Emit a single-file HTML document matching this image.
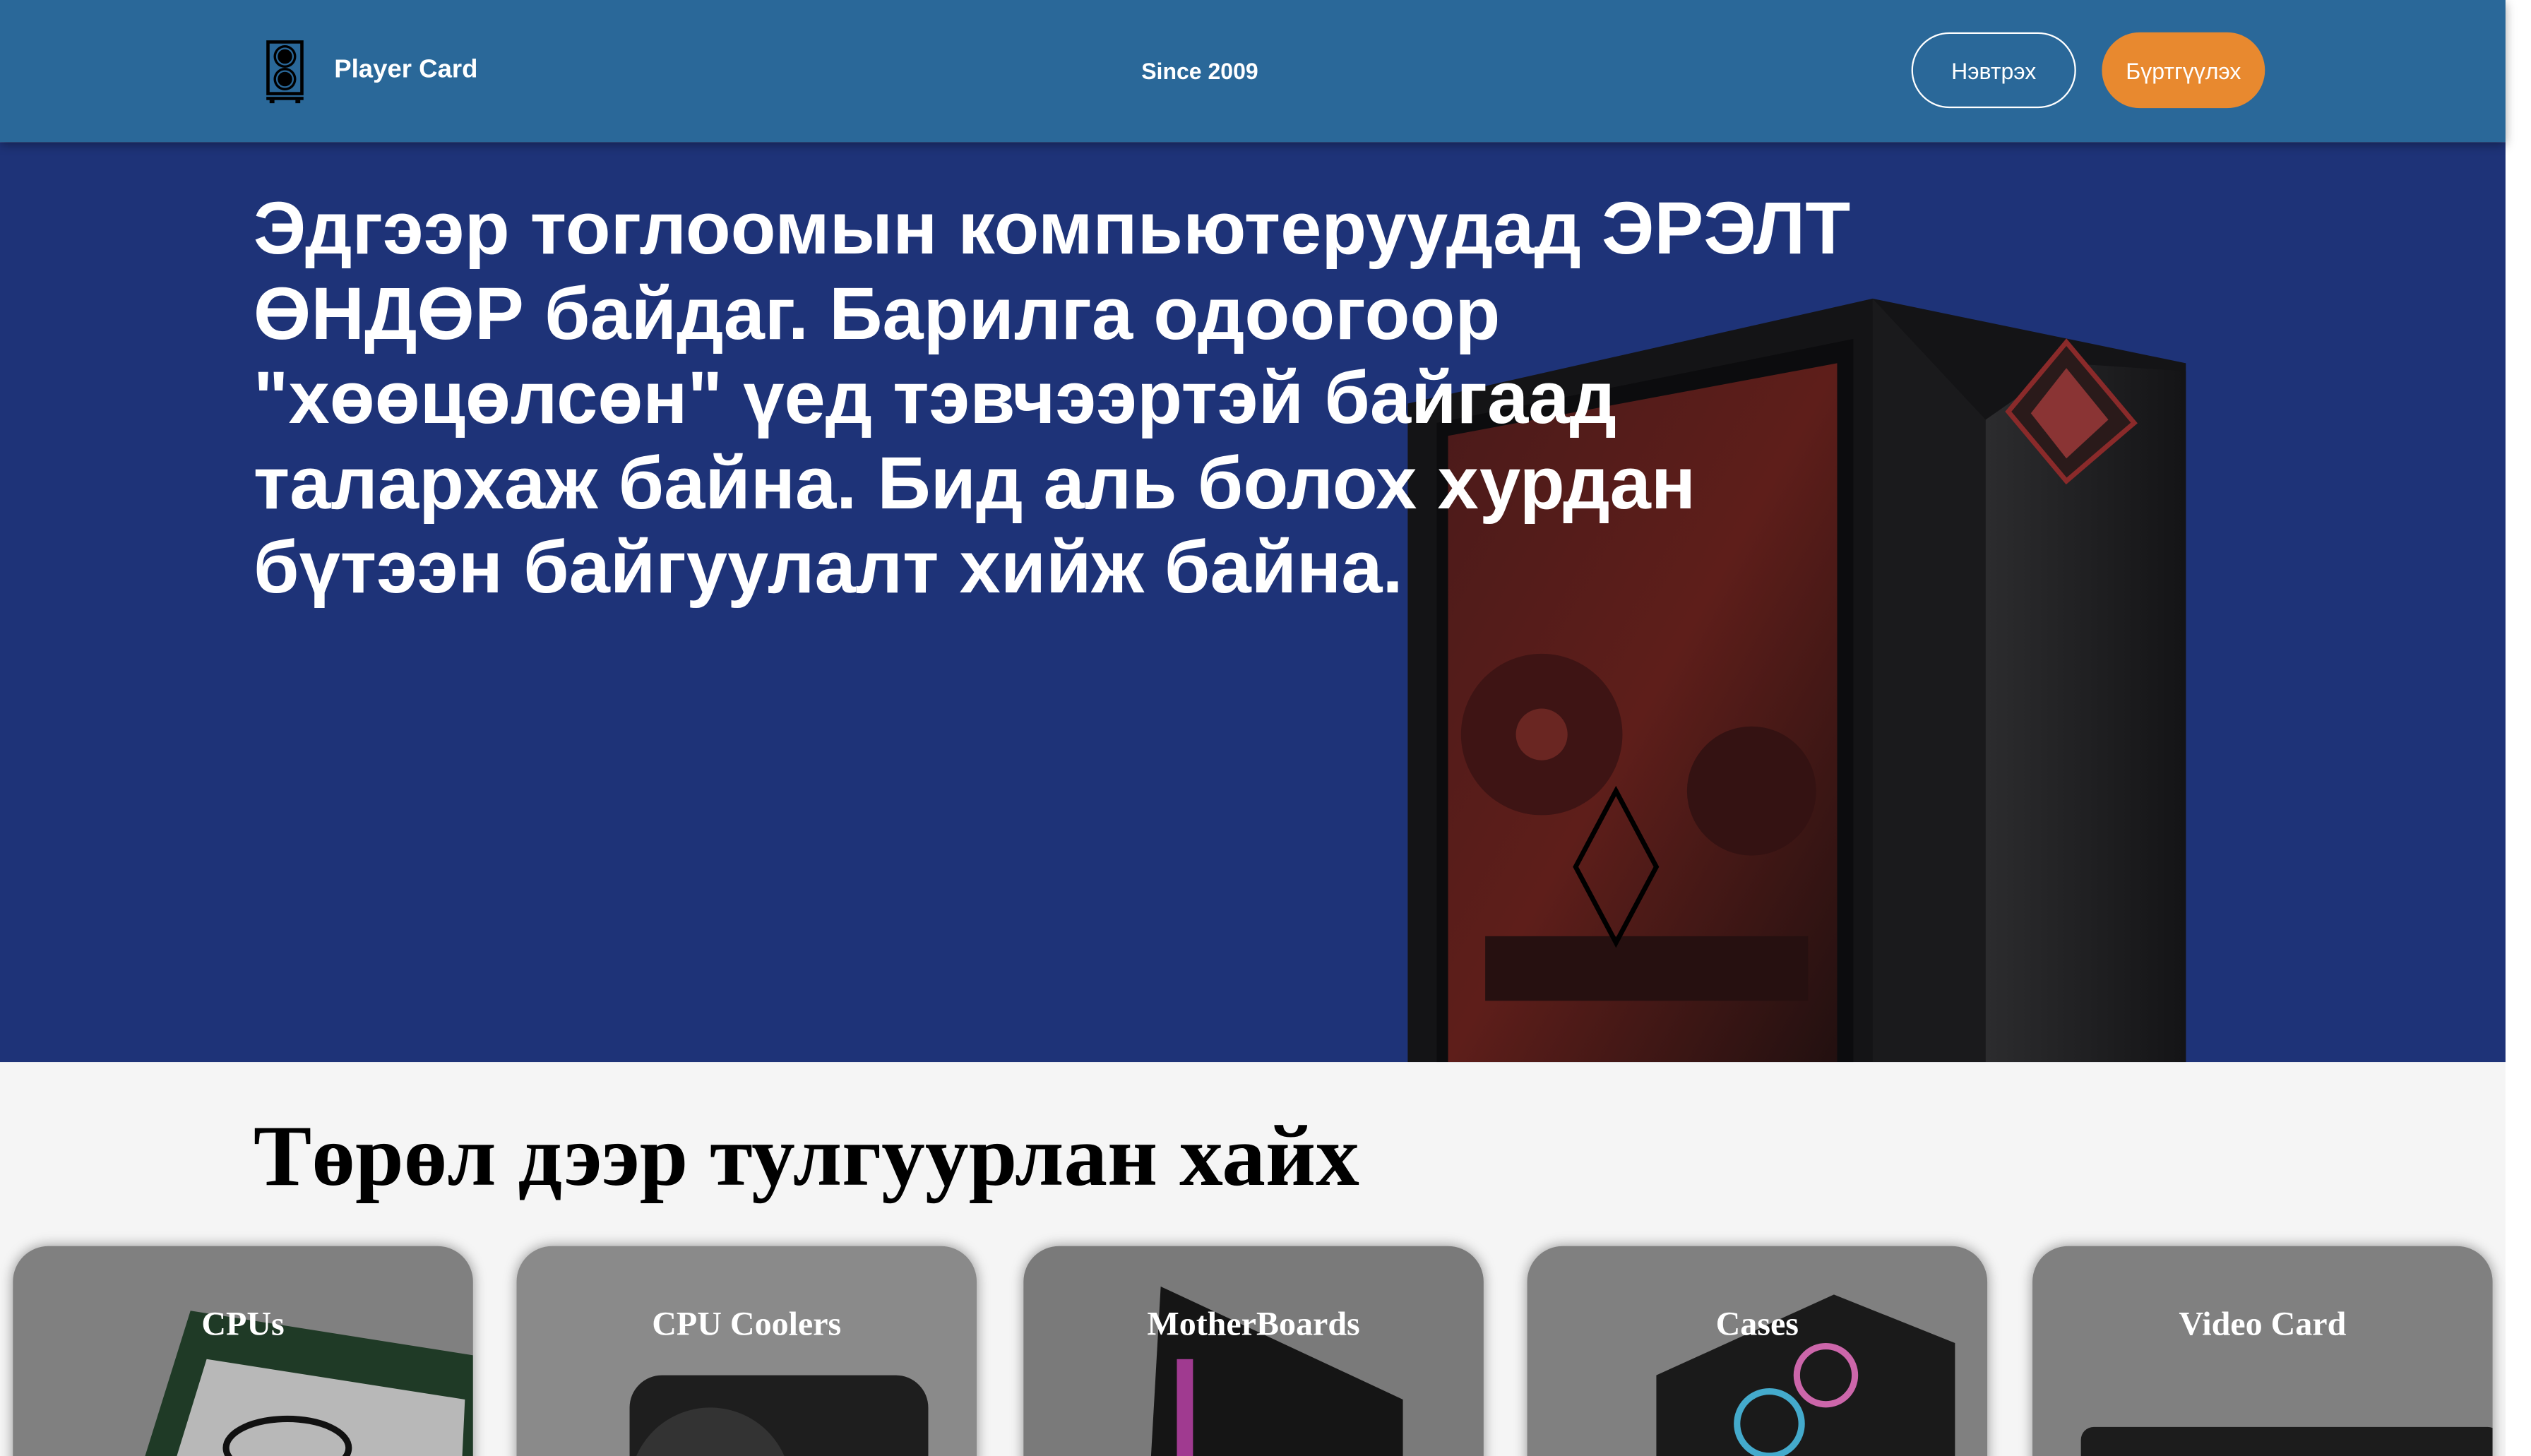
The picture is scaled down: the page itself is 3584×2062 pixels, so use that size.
<!DOCTYPE html>
<html><head><meta charset="utf-8">
<style>
html,body{margin:0;padding:0;width:3584px;height:2062px;overflow:hidden;}
body{background:#fff;}
#w{width:1568px;height:902px;transform:scale(2.286);transform-origin:0 0;position:relative;font-family:"Liberation Sans",sans-serif;}
header{position:absolute;left:0;top:0;width:1552px;height:88px;background:#2a6899;box-shadow:0 2px 6px rgba(0,0,0,.35);z-index:3;}
.brand{position:absolute;left:207px;top:35px;color:#fff;font-weight:bold;font-size:16px;}
.since{position:absolute;left:707px;top:36px;color:#fff;font-weight:bold;font-size:14px;}
.btn{position:absolute;top:20px;height:47px;border-radius:24px;color:#fff;font-size:14px;display:flex;align-items:center;justify-content:center;box-sizing:border-box;}
.b1{left:1184px;width:102px;border:1px solid #fff;}
.b2{left:1302px;width:101px;background:#e8892f;}
.hero{position:absolute;left:0;top:88px;width:1552px;height:570px;background:#1e3378;overflow:hidden;}
h1{position:absolute;left:157px;top:28px;margin:0;width:1050px;color:#fff;font-size:45.8px;line-height:52.5px;font-weight:bold;z-index:2;}
.sec{position:absolute;left:0;top:658px;width:1552px;height:244px;background:#f5f5f5;overflow:hidden;}
h2{position:absolute;left:157px;top:27px;margin:0;font-family:"Liberation Serif",serif;font-size:54px;font-weight:bold;color:#000;}
.card{position:absolute;top:114px;width:285px;height:200px;border-radius:22px;background:#808080;box-shadow:0 0 8px rgba(0,0,0,.4);overflow:hidden;}
.card span{position:absolute;left:0;right:0;top:36px;text-align:center;color:#fff;font-family:"Liberation Serif",serif;font-weight:bold;font-size:21px;z-index:2;}
</style></head><body><div id="w">
<header>
<svg style="position:absolute;left:164px;top:24px" width="25" height="40" viewBox="0 0 25 40">
<rect x="1" y="1" width="23" height="34" fill="#000"/><rect x="3" y="3" width="19" height="30" fill="#2a6899"/>
<circle cx="12.5" cy="11" r="7" fill="#000"/><circle cx="12.5" cy="11" r="5.5" fill="#2a6899"/><circle cx="12.5" cy="11" r="4.5" fill="#000"/>
<circle cx="12.5" cy="25" r="7" fill="#000"/><circle cx="12.5" cy="25" r="5.5" fill="#2a6899"/><circle cx="12.5" cy="25" r="4.5" fill="#000"/>
<rect x="1" y="36" width="23" height="2" fill="#000"/><rect x="3" y="38" width="3" height="2" fill="#000"/><rect x="19" y="38" width="3" height="2" fill="#000"/>
</svg>
<div class="brand">Player Card</div>
<div class="since">Since 2009</div>
<div class="btn b1">Нэвтрэх</div>
<div class="btn b2">Бүртгүүлэх</div>
</header>
<div class="hero">
<svg style="position:absolute;left:0;top:0" width="1552" height="570" viewBox="0 88 1552 570">
<defs>
<linearGradient id="rg" x1="0" y1="0" x2="1" y2="1"><stop offset="0" stop-color="#4a1a1a"/><stop offset=".5" stop-color="#5e1e1a"/><stop offset="1" stop-color="#221010"/></linearGradient>
<linearGradient id="fg" x1="0" x2="1"><stop offset="0" stop-color="#2c2c2e"/><stop offset="1" stop-color="#141416"/></linearGradient>
</defs>
<polygon points="872,250 1160,185 1354,225 1354,658 872,658" fill="#141416"/>
<polygon points="1160,185 1230,260 1230,658 1160,658" fill="#1a1a1c"/>
<polygon points="1230,260 1280,225 1354,230 1354,658 1230,658" fill="url(#fg)"/>
<polygon points="890,262 1148,210 1148,658 890,658" fill="#0c0c0e"/>
<polygon points="897,270 1138,225 1138,658 897,658" fill="url(#rg)"/>
<circle cx="955" cy="455" r="50" fill="#3e1414"/><circle cx="955" cy="455" r="16" fill="#6a2622"/>
<circle cx="1085" cy="490" r="40" fill="#341212"/>
<rect x="920" y="580" width="200" height="40" fill="#261010"/>
<polygon points="1001,490 1026,537 1001,584 976,537" fill="none" stroke="#000" stroke-width="3"/>
<polygon points="1280,212 1322,262 1280,298 1244,255" fill="#2a1a1a" stroke="#8a2a2a" stroke-width="3"/>
<polygon points="1280,228 1306,260 1280,284 1258,256" fill="#8a3434"/>
</svg>
<h1>Эдгээр тоглоомын компьютеруудад ЭРЭЛТ ӨНДӨР байдаг. Барилга одоогоор "хөөцөлсөн" үед тэвчээртэй байгаад талархаж байна. Бид аль болох хурдан бүтээн байгуулалт хийж байна.</h1>
</div>
<div class="sec">
<h2>Төрөл дээр тулгуурлан хайх</h2>
<div class="card" style="left:8px"><span>CPUs</span>
<svg width="285" height="200"><polygon points="60,200 110,40 300,70 290,200" fill="#1f3a26"/><polygon points="80,200 120,70 280,95 275,200" fill="#b8b8b8"/><ellipse cx="170" cy="125" rx="38" ry="18" fill="none" stroke="#111" stroke-width="4"/></svg></div>
<div class="card" style="left:320px;background:#8a8a8a"><span>CPU Coolers</span>
<svg width="285" height="200"><rect x="70" y="80" width="185" height="120" rx="20" fill="#1e1e1e"/><circle cx="120" cy="150" r="50" fill="#333"/></svg></div>
<div class="card" style="left:634px;background:#7a7a7a"><span>MotherBoards</span>
<svg width="285" height="200"><polygon points="75,200 85,25 235,95 235,200" fill="#151515"/><rect x="95" y="70" width="10" height="80" fill="#a03a90"/></svg></div>
<div class="card" style="left:946px"><span>Cases</span>
<svg width="285" height="200"><polygon points="80,200 80,80 190,30 265,60 265,200" fill="#1a1a1a"/><circle cx="150" cy="110" r="20" fill="none" stroke="#4ac" stroke-width="4"/><circle cx="185" cy="80" r="18" fill="none" stroke="#c6a" stroke-width="4"/></svg></div>
<div class="card" style="left:1259px"><span>Video Card</span>
<svg width="285" height="200"><rect x="30" y="112" width="260" height="90" rx="8" fill="#1c1c1c"/></svg></div>
</div>
</div></body></html>
